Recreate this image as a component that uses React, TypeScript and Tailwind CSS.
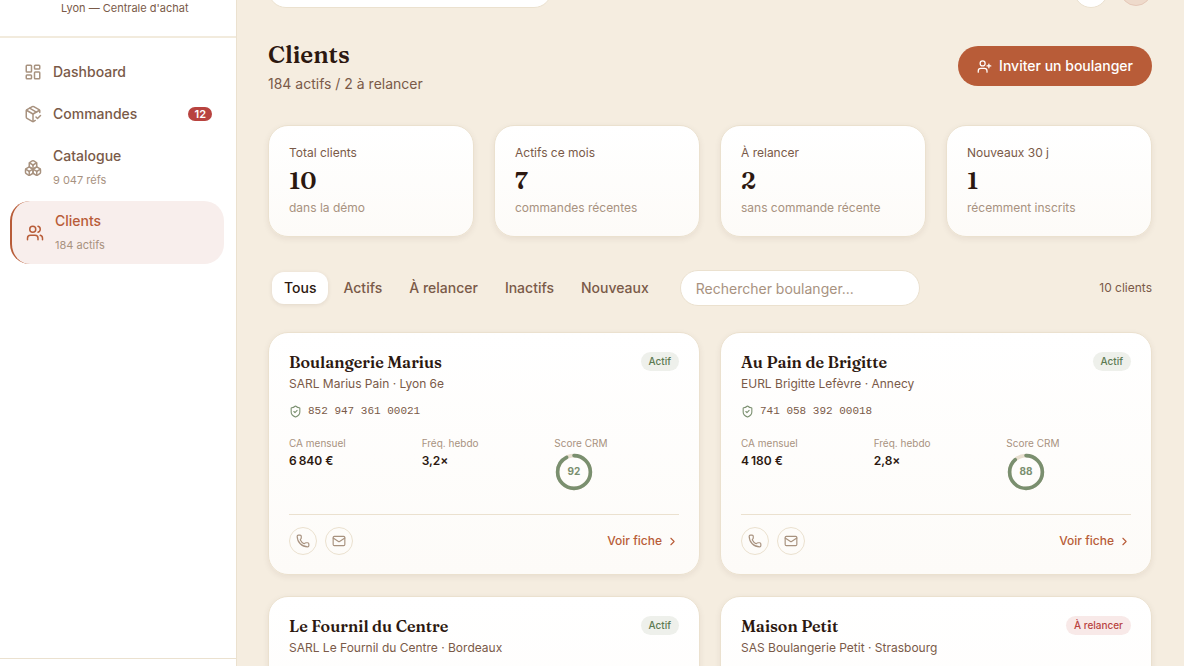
import {
  Boxes,
  ChevronRight,
  LayoutDashboard,
  Mail,
  PackageCheck,
  Phone,
  ShieldCheck,
  UserPlus,
  Users,
  type LucideIcon,
} from 'lucide-react'
import clsx from 'clsx'

interface NavItem {
  label: string
  icon: LucideIcon
  hint?: string
  badge?: number
  active?: boolean
}

interface Client {
  name: string
  legal: string
  siret: string
  status: 'Actif' | 'À relancer'
  revenue: string
  frequency: string
  score: number
}

const navItems: NavItem[] = [
  { label: 'Dashboard', icon: LayoutDashboard },
  { label: 'Commandes', icon: PackageCheck, badge: 12 },
  { label: 'Catalogue', icon: Boxes, hint: '9 047 réfs' },
  { label: 'Clients', icon: Users, hint: '184 actifs', active: true },
]

const stats = [
  { label: 'Total clients', value: '10', hint: 'dans la démo' },
  { label: 'Actifs ce mois', value: '7', hint: 'commandes récentes' },
  { label: 'À relancer', value: '2', hint: 'sans commande récente' },
  { label: 'Nouveaux 30 j', value: '1', hint: 'récemment inscrits' },
]

const filters = ['Tous', 'Actifs', 'À relancer', 'Inactifs', 'Nouveaux']

const clients: Client[] = [
  {
    name: 'Boulangerie Marius',
    legal: 'SARL Marius Pain · Lyon 6e',
    siret: '852 947 361 00021',
    status: 'Actif',
    revenue: '6\u202f840 €',
    frequency: '3,2×',
    score: 92,
  },
  {
    name: 'Au Pain de Brigitte',
    legal: 'EURL Brigitte Lefèvre · Annecy',
    siret: '741 058 392 00018',
    status: 'Actif',
    revenue: '4\u202f180 €',
    frequency: '2,8×',
    score: 88,
  },
  {
    name: 'Le Fournil du Centre',
    legal: 'SARL Le Fournil du Centre · Bordeaux',
    siret: '630 169 283 00035',
    status: 'Actif',
    revenue: '5\u202f290 €',
    frequency: '3,0×',
    score: 85,
  },
  {
    name: 'Maison Petit',
    legal: 'SAS Boulangerie Petit · Strasbourg',
    siret: '529 270 174 00042',
    status: 'À relancer',
    revenue: '1\u202f960 €',
    frequency: '0,8×',
    score: 46,
  },
]

function Sidebar() {
  return (
    <aside className="flex w-[237px] shrink-0 flex-col border-r border-[#ebe1cf] bg-white">
      <div className="border-b-2 border-[#f2ebdd] pr-3 pb-5 pl-[61px] text-[11px] leading-4 text-[#7a5a48]">
        Lyon — Centrale d'achat
      </div>
      <nav className="flex flex-1 flex-col gap-0.5 pt-[14px] pr-3 pb-4 pl-[10px]">
        {navItems.map(({ label, icon: Icon, hint, badge, active }) => (
          <a
            key={label}
            href="#"
            className={clsx(
              'flex items-center gap-[11px] rounded-[20px] pr-3 pl-[14px] text-sm font-medium',
              hint ? 'h-[63px]' : 'h-10',
              active
                ? 'border-l-2 border-[#b85c38] bg-[#f8eeec] text-[#b85c38]'
                : 'text-[#7a5a48]',
            )}
          >
            <Icon size={18} strokeWidth={2} className={active ? 'text-[#b85c38]' : 'text-[#a8927f]'} />
            <span className="flex flex-1 flex-col">
              <span className="leading-6">{label}</span>
              {hint && (
                <span className="text-[11px] leading-6 font-normal text-[#a8927f]">{hint}</span>
              )}
            </span>
            {badge && (
              <span className="rounded-full bg-[#b8433f] px-[6px] text-[11px] leading-[14px] font-semibold text-white">
                {badge}
              </span>
            )}
          </a>
        ))}
      </nav>
      <div className="h-2 border-t border-[#ebe1cf]" />
    </aside>
  )
}

function ScoreRing({ score }: { score: number }) {
  const length = 2 * Math.PI * 16.4
  return (
    <svg width="40" height="38" viewBox="0 0 40 38" role="img" aria-label={`Score ${score}`}>
      <circle cx="20" cy="19" r="16.4" fill="none" stroke="#e8dfcf" strokeWidth="3.6" />
      <circle
        cx="20"
        cy="19"
        r="16.4"
        fill="none"
        stroke="#7a8f6f"
        strokeWidth="3.6"
        strokeLinecap="round"
        strokeDasharray={`${(length * score) / 100} ${length}`}
        transform="rotate(-90 20 19)"
      />
      <text
        x="20"
        y="22"
        textAnchor="middle"
        fill="#7a8f6f"
        className="text-[10px] font-bold"
      >
        {score}
      </text>
    </svg>
  )
}

function ClientCard({ client }: { client: Client }) {
  return (
    <article className="rounded-[20px] border border-[#ebe1cf] bg-linear-to-b from-white to-[#fdfbf8] px-5 pt-[17px] pb-[19px] shadow-[0_2px_6px_rgba(60,30,10,0.07)]">
      <div className="flex items-start justify-between">
        <div>
          <h2 className="font-['Fraunces','Liberation_Serif',serif] text-base leading-[25px] font-semibold text-[#2c1810]">
            {client.name}
          </h2>
          <p className="text-xs leading-[18px] text-[#7a5a48]">{client.legal}</p>
        </div>
        <span
          className={clsx(
            'mt-[2px] rounded-full px-2 text-[10px] leading-[19px] font-medium',
            client.status === 'Actif' ? 'bg-[#eef0eb] text-[#5d7a52]' : 'bg-[#f8e9e8] text-[#b8433f]',
          )}
        >
          {client.status}
        </span>
      </div>

      <div className="mt-2 flex items-center gap-[6px] text-[#7a5a48]">
        <ShieldCheck size={13} className="text-[#7a8f6f]" />
        <span className="font-['Liberation_Mono',monospace] text-[11px] leading-5">{client.siret}</span>
      </div>

      <dl className="mt-[14px] grid grid-cols-3 gap-2">
        <div>
          <dt className="text-[10px] leading-4 text-[#a8927f]">CA mensuel</dt>
          <dd className="text-xs leading-5 font-semibold text-[#2c1810]">{client.revenue}</dd>
        </div>
        <div>
          <dt className="text-[10px] leading-4 text-[#a8927f]">Fréq. hebdo</dt>
          <dd className="text-xs leading-5 font-semibold text-[#2c1810]">{client.frequency}</dd>
        </div>
        <div>
          <dt className="text-[10px] leading-4 text-[#a8927f]">Score CRM</dt>
          <dd className="pt-[2px]">
            <ScoreRing score={client.score} />
          </dd>
        </div>
      </dl>

      <div className="mt-[23px] flex items-center justify-between border-t border-[#ebe1cf] pt-3">
        <div className="flex gap-2">
          <button
            aria-label="Appeler"
            className="flex size-7 items-center justify-center rounded-full border border-[#ebe1cf] text-[#a8927f]"
          >
            <Phone size={14} />
          </button>
          <button
            aria-label="Envoyer un e-mail"
            className="flex size-7 items-center justify-center rounded-full border border-[#ebe1cf] text-[#a8927f]"
          >
            <Mail size={14} />
          </button>
        </div>
        <a href="#" className="flex items-center gap-1 text-xs font-medium text-[#b85c38]">
          Voir fiche
          <ChevronRight size={13} />
        </a>
      </div>
    </article>
  )
}

export default function App() {
  return (
    <div className="flex h-screen overflow-hidden bg-[#f5ede0] font-['Inter',sans-serif] text-[#2c1810]">
      <Sidebar />
      <main className="min-w-0 flex-1 overflow-hidden pr-8 pl-[31px]">
        {/* Top bar, scrolled almost out of view */}
        <div className="flex h-2 items-end justify-between overflow-hidden">
          <input
            type="search"
            aria-label="Recherche globale"
            className="h-9 w-[284px] shrink-0 rounded-full border border-[#ebe1cf] bg-white"
          />
          <div className="flex items-end gap-3">
            <button
              aria-label="Notifications"
              className="size-[34px] rounded-full border border-[#ebe1cf] bg-white"
            />
            <button
              aria-label="Profil"
              className="mb-[2px] size-8 rounded-full border border-[#e5c8b8] bg-[#eedacb]"
            />
          </div>
        </div>

        <header className="mt-[29px] flex items-center justify-between">
          <div>
            <h1 className="font-['Fraunces','Liberation_Serif',serif] text-2xl leading-9 font-semibold">
              Clients
            </h1>
            <p className="text-sm leading-[22px] text-[#7a5a48]">184 actifs / 2 à relancer</p>
          </div>
          <button className="flex h-10 items-center gap-[7px] rounded-full bg-[#b85c38] px-[19px] text-sm font-medium text-white">
            <UserPlus size={15} />
            Inviter un boulanger
          </button>
        </header>

        <section className="mt-[30px] grid grid-cols-4 gap-5">
          {stats.map(({ label, value, hint }) => (
            <div
              key={label}
              className="rounded-[20px] border border-[#ebe1cf] bg-linear-to-b from-white to-[#fdfbf8] px-5 pt-[17px] pb-[18px] shadow-[0_2px_6px_rgba(60,30,10,0.07)]"
            >
              <div className="text-xs leading-5 text-[#7a5a48]">{label}</div>
              <div className="font-['Fraunces','Liberation_Serif',serif] text-2xl leading-[35px] font-semibold">
                {value}
              </div>
              <div className="text-xs leading-5 text-[#a8927f]">{hint}</div>
            </div>
          ))}
        </section>

        <section className="mt-[33px] flex items-center">
          <div className="flex gap-[3px] px-1">
            {filters.map((filter, i) => (
              <button
                key={filter}
                className={clsx(
                  'h-8 rounded-xl px-3 text-sm font-medium',
                  i === 0
                    ? 'bg-white text-[#2c1810] shadow-[0_1px_4px_rgba(60,30,10,0.1)]'
                    : 'text-[#7a5a48]',
                )}
              >
                {filter}
              </button>
            ))}
          </div>
          <input
            type="search"
            aria-label="Rechercher boulanger"
            placeholder="Rechercher boulanger..."
            className="ml-[15px] h-9 w-60 rounded-full border border-[#ebe1cf] bg-white px-[15px] text-sm placeholder:text-[#a8927f]"
          />
          <span className="ml-auto text-xs text-[#7a5a48]">10 clients</span>
        </section>

        <section className="mt-[26px] grid grid-cols-2 gap-x-5 gap-y-[21px]">
          {clients.map((client) => (
            <ClientCard key={client.name} client={client} />
          ))}
        </section>
      </main>
    </div>
  )
}
